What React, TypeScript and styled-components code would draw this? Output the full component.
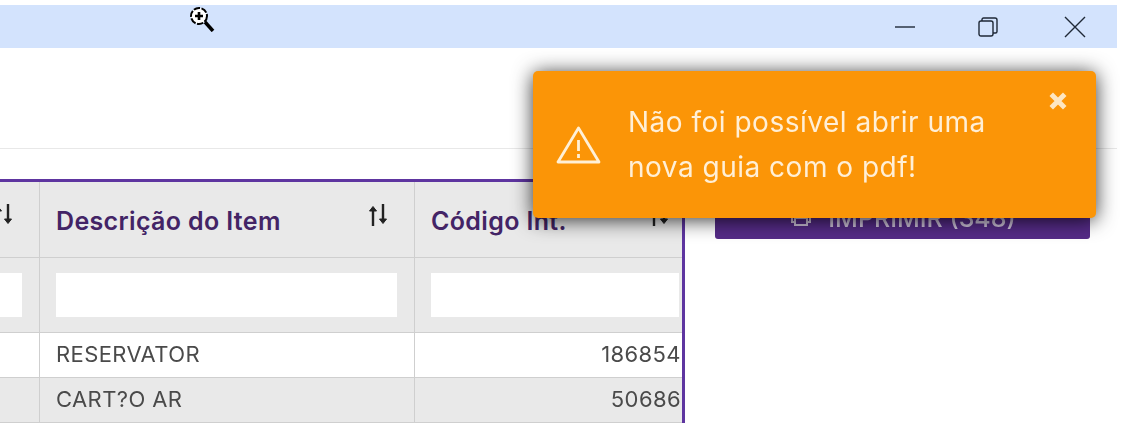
import React from 'react'
import styled, { createGlobalStyle } from 'styled-components'

const GlobalStyle = createGlobalStyle`
  html, body {
    margin: 0;
    padding: 0;
    background: #fff;
  }
  body {
    width: 1133px;
    height: 425px;
    overflow: hidden;
    font-family: 'Inter', 'Liberation Sans', sans-serif;
  }
`
const Page = styled.div`
  position: relative;
  width: 1133px;
  height: 425px;
  padding-top: 5px;
  box-sizing: border-box;
  overflow: hidden;
`
const TitleBar = styled.div`
  display: flex;
  justify-content: flex-end;
  align-items: center;
  width: 1117px;
  height: 43px;
  padding-right: 32px;
  gap: 65px;
  box-sizing: border-box;
  background: #d3e3fd;
`
const WinButton = styled.svg`
  width: 20px;
  height: 20px;
  overflow: visible;
  fill: none;
  stroke: #1f2937;
  stroke-width: 1.4;
`
const Toolbar = styled.div`
  height: 100px;
  border-bottom: 1px solid #e8e8e8;
  width: 1117px;
`
const Content = styled.div`
  display: flex;
  align-items: flex-start;
  margin-top: 30px;
  filter: blur(0.4px);
`
const Table = styled.div`
  width: 685px;
  flex-shrink: 0;
  box-sizing: border-box;
  border-top: 3px solid #5e35a0;
  border-right: 3px solid #5e35a0;
  display: grid;
  grid-template-columns: 40px 375px 1fr;
`
const HeadCell = styled.div<{ $arrowGap: number; $last?: boolean }>`
  height: 76px;
  box-sizing: border-box;
  display: flex;
  align-items: center;
  justify-content: space-between;
  padding: 3px ${p => p.$arrowGap}px 0 16px;
  background: #e9e9e9;
  border-right: ${p => (p.$last ? '0' : '1px solid #cfcfcf')};
  border-bottom: 1px solid #cfcfcf;
  font-size: 25px;
  font-weight: 600;
  letter-spacing: 0.35px;
  color: #432466;
`
const StubHeadCell = styled(HeadCell)`
  justify-content: flex-end;
  padding-left: 0;
`
const SortIcon = styled.svg`
  width: 22px;
  height: 24px;
  margin-top: -12px;
  flex-shrink: 0;
  fill: #222;
  stroke: #222;
  stroke-width: 2.4;
`
const FilterCell = styled.div<{ $left: number; $right: number; $last?: boolean }>`
  height: 75px;
  box-sizing: border-box;
  padding: 15px ${p => p.$right}px 15px ${p => p.$left}px;
  background: #e9e9e9;
  border-right: ${p => (p.$last ? '0' : '1px solid #cfcfcf')};
  border-bottom: 1px solid #cfcfcf;
`
const FilterInput = styled.div`
  height: 44px;
  background: #fff;
`
const BodyCell = styled.div<{ $striped?: boolean; $right?: boolean; $last?: boolean }>`
  height: 45px;
  box-sizing: border-box;
  display: flex;
  align-items: center;
  justify-content: ${p => (p.$right ? 'flex-end' : 'flex-start')};
  padding: 0 1px 2px 16px;
  background: ${p => (p.$striped ? '#e9e9e9' : '#fff')};
  border-right: ${p => (p.$last ? '0' : '1px solid #cfcfcf')};
  border-bottom: 1px solid #cfcfcf;
  font-size: 22px;
  letter-spacing: 0.4px;
  color: #4a4a4a;
`
const SidePanel = styled.div`
  flex: 0 0 375px;
  margin-left: 30px;
`
const PrintButton = styled.div`
  height: 60px;
  box-sizing: border-box;
  display: flex;
  align-items: flex-end;
  justify-content: center;
  gap: 15px;
  padding-bottom: 6px;
  background: #552b87;
  border-radius: 3px;
  color: #d0c4dc;
  font-size: 25px;
  font-weight: 500;
`
const PrintIcon = styled.svg`
  width: 24px;
  height: 24px;
  margin-bottom: 5px;
  fill: none;
  stroke: #d0c4dc;
  stroke-width: 2;
`
const Toast = styled.div`
  position: absolute;
  left: 533px;
  top: 71px;
  width: 563px;
  height: 147px;
  box-sizing: border-box;
  display: flex;
  align-items: center;
  padding: 0 40px 0 23px;
  gap: 27px;
  background: #fb9507;
  border-radius: 5px;
  box-shadow: 0 2px 20px rgba(0, 0, 0, 0.8);
  color: #ffefd6;
  filter: blur(0.4px);
`
const ToastMessage = styled.div`
  font-size: 28px;
  line-height: 45px;
  letter-spacing: 0.5px;
`
const ToastClose = styled.svg`
  position: absolute;
  top: 21px;
  right: 29px;
  width: 18px;
  height: 18px;
  stroke: #fde6c2;
  stroke-width: 4.4;
`
const WarnIcon = styled.svg`
  width: 45px;
  height: 40px;
  flex-shrink: 0;
  fill: none;
  stroke: #fff0d6;
  stroke-width: 2.8;
`
const ZoomCursor = styled.svg`
  position: absolute;
  left: 189px;
  top: 6px;
  width: 26px;
  height: 26px;
`

const SortArrows = () => (
  <SortIcon viewBox="0 0 22 24">
    <path d="M6 23V6" fill="none" />
    <path d="M2.500 8 6 3.500 9.500 8z" strokeWidth="1" />
    <path d="M16 1v17" fill="none" />
    <path d="M12.500 16 16 20.500 19.500 16z" strokeWidth="1" />
  </SortIcon>
)

const App = () => (
  <Page>
    <GlobalStyle />
    <TitleBar>
      <WinButton viewBox="0 0 20 20">
        <path d="M0 10h20" />
      </WinButton>
      <WinButton viewBox="2 0 20 20">
        <rect x="1" y="4" width="14" height="15" rx="2" />
        <path d="M4 4V2.500A1.500 1.500 0 0 1 5.500 1H17a2 2 0 0 1 2 2v11.500a1.500 1.500 0 0 1-1.500 1.500H15" />
      </WinButton>
      <WinButton viewBox="0 0 20 20">
        <path d="M0 0l20 20M20 0 0 20" />
      </WinButton>
    </TitleBar>
    <Toolbar />
    <Content>
      <Table>
        <StubHeadCell $arrowGap={25}>
          <SortArrows />
        </StubHeadCell>
        <HeadCell $arrowGap={25}>
          Descrição do Item
          <SortArrows />
        </HeadCell>
        <HeadCell $arrowGap={12} $last>
          Código Int.
          <SortArrows />
        </HeadCell>
        <FilterCell $left={0} $right={17}>
          <FilterInput />
        </FilterCell>
        <FilterCell $left={16} $right={17}>
          <FilterInput />
        </FilterCell>
        <FilterCell $left={16} $right={3} $last>
          <FilterInput />
        </FilterCell>
        <BodyCell />
        <BodyCell>RESERVATOR</BodyCell>
        <BodyCell $right $last>186854</BodyCell>
        <BodyCell $striped />
        <BodyCell $striped>CART?O AR</BodyCell>
        <BodyCell $striped $right $last>50686</BodyCell>
      </Table>
      <SidePanel>
        <PrintButton>
          <PrintIcon viewBox="0 0 24 24">
            <path d="M6 9V3h12v6M6 18H3v-8h18v8h-3M6 14h12v7H6z" />
          </PrintIcon>
          IMPRIMIR (348)
        </PrintButton>
      </SidePanel>
    </Content>
    <Toast>
      <WarnIcon viewBox="0 0 45 40">
        <path d="M22.500 3 43 37H2z" strokeLinejoin="round" />
        <path d="M22.500 15v11M22.500 29v4" />
      </WarnIcon>
      <ToastMessage>
        Não foi possível abrir uma
        <br />
        nova guia com o pdf!
      </ToastMessage>
      <ToastClose viewBox="0 0 16 16">
        <path d="M2 2l12 12M14 2 2 14" />
      </ToastClose>
    </Toast>
    <ZoomCursor viewBox="0 0 26 26">
      <circle cx="10" cy="10" r="8" fill="#fff" stroke="#000" strokeWidth="2" strokeDasharray="6.500 1.500" />
      <path d="M6 10h8M10 6v8" stroke="#000" strokeWidth="2.600" />
      <path d="M16 16l8 9" stroke="#000" strokeWidth="3.500" />
    </ZoomCursor>
  </Page>
)

export default App
